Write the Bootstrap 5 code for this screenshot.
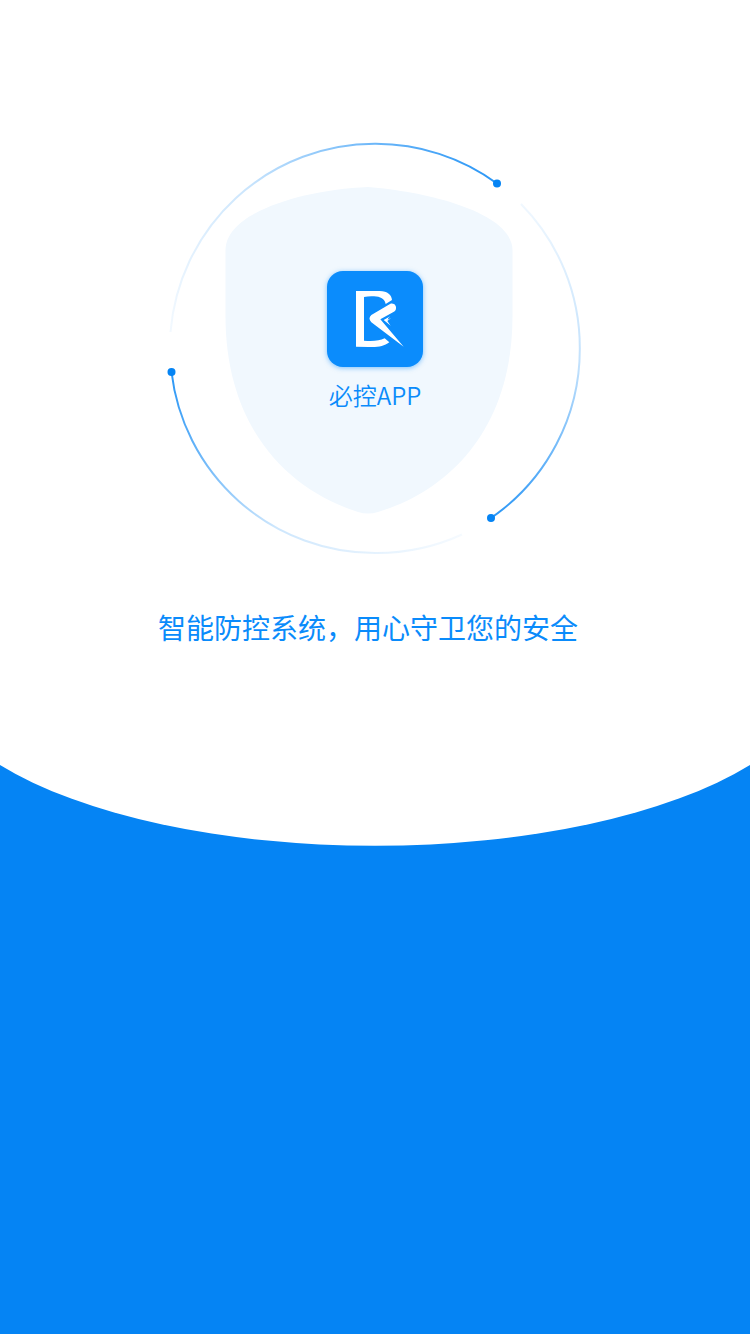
<!DOCTYPE html>
<html lang="zh-CN">
<head>
<meta charset="utf-8">
<meta name="viewport" content="width=device-width, initial-scale=1">
<title>必控APP</title>
<link href="https://cdn.jsdelivr.net/npm/bootstrap@5.3.0/dist/css/bootstrap.min.css" rel="stylesheet">
<style>
  body {
    background: #0584f4;
    color: #0a8bfb;
    font-family: "Noto Sans CJK SC", sans-serif;
  }
  .splash-top { padding-top: 139px; padding-bottom: 118px; }
  .emblem { width: 416px; max-width: 100%; }
  .brand { padding-top: 132px; }
  .brand-logo {
    width: 96px;
    height: 96px;
    border-radius: 16px;
    background: #0b8cfc;
    box-shadow: 0 1px 5px rgba(11, 140, 252, .5);
  }
  .brand-name { font-size: 24px; line-height: 36px; font-weight: 350; margin-top: 10px; }
  .tagline {
    font-family: "KaiTi", "STKaiti", "Noto Sans CJK SC", sans-serif;
    font-size: 28px;
    line-height: 40px;
    font-weight: 400;
    margin-top: 52px;
    padding-right: 14px;
  }
  .curve { height: 81px; }
</style>
</head>
<body>
<main class="min-vh-100">
  <section class="splash-top bg-white d-flex flex-column align-items-center text-center">
    <div class="emblem position-relative">
      <svg class="d-block w-100" viewBox="167 139 416 416" fill="none" aria-hidden="true">
        <defs>
          <linearGradient id="arcTop" gradientUnits="userSpaceOnUse" x1="170" y1="332" x2="497" y2="183">
            <stop offset="0" stop-color="#0584f4" stop-opacity=".05"/>
            <stop offset=".35" stop-color="#0584f4" stop-opacity=".2"/>
            <stop offset="1" stop-color="#0584f4" stop-opacity=".85"/>
          </linearGradient>
          <linearGradient id="arcRight" gradientUnits="userSpaceOnUse" x1="521" y1="204" x2="491" y2="518">
            <stop offset="0" stop-color="#0584f4" stop-opacity=".06"/>
            <stop offset=".5" stop-color="#0584f4" stop-opacity=".25"/>
            <stop offset="1" stop-color="#0584f4" stop-opacity=".85"/>
          </linearGradient>
          <linearGradient id="arcBottom" gradientUnits="userSpaceOnUse" x1="171" y1="372" x2="462" y2="534">
            <stop offset="0" stop-color="#0584f4" stop-opacity=".85"/>
            <stop offset=".5" stop-color="#0584f4" stop-opacity=".2"/>
            <stop offset="1" stop-color="#0584f4" stop-opacity=".04"/>
          </linearGradient>
        </defs>
        <path fill="#f1f8fe" d="M368 187C430 192 512 213 512.500 250V316C512.500 428 450 490 378 512Q368 515 358 512C288 490 225.500 428 225.500 316V250C226 213 300 190 368 187Z"/>
        <g stroke-width="2">
          <path stroke="url(#arcTop)" d="M170.500 332A205 205 0 0 1 375 143.800A205 205 0 0 1 497 183.500"/>
          <path stroke="url(#arcRight)" d="M521 204A205 205 0 0 1 579.800 348A205 205 0 0 1 491 518"/>
          <path stroke="url(#arcBottom)" d="M171.500 372A205 205 0 0 0 375 553A205 205 0 0 0 462 534.500"/>
        </g>
        <g fill="#0584f4">
          <circle cx="497" cy="183.500" r="4"/>
          <circle cx="491" cy="518" r="4"/>
          <circle cx="171.500" cy="372" r="4"/>
        </g>
      </svg>
      <div class="brand position-absolute top-0 start-0 w-100 d-flex flex-column align-items-center">
        <svg class="brand-logo" viewBox="0 0 288 288" fill="#fff" role="img" aria-label="必控">
          <path d="M87 60H158C182 60 194 72 195 87L176 99C173 83 160 77 141 76Q125 75 111 78V209Q150 213 173 202L187 214C170 226 155 229 125 228L87 227Z"/>
          <path d="M189 99C200 94 211 104 206 117Q204 121 198 124L160 145L230 227L133 154Q122 142 133 132Z"/>
          <path d="M190 136L170 147L191 164L181 150L192 141L182 146L184 141Z"/>
        </svg>
        <h1 class="brand-name mb-0">必控APP</h1>
      </div>
    </div>
    <p class="tagline mb-0">智能防控系统，用心守卫您的安全</p>
  </section>
  <svg class="curve d-block w-100" viewBox="0 0 750 81" preserveAspectRatio="none" aria-hidden="true">
    <path fill="#fff" d="M0 -1V0A445 175 0 0 0 750 0V-1Z"/>
  </svg>
</main>
<script src="https://cdn.jsdelivr.net/npm/bootstrap@5.3.0/dist/js/bootstrap.bundle.min.js"></script>
</body>
</html>
